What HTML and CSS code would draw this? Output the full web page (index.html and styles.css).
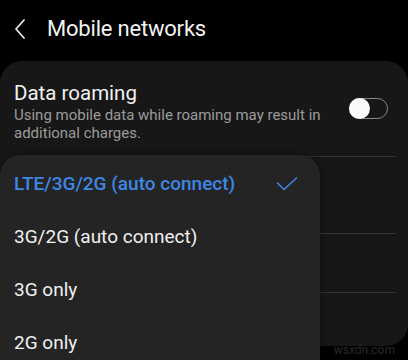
FILE: index.html
```html
<!DOCTYPE html>
<html>
<head>
<meta charset="utf-8">
<link rel="stylesheet" href="styles.css">
</head>
<body>
<div class="screen">
  <header class="header">
    <svg class="back" width="14" height="22" viewBox="0 0 14 22"><path d="M11 2 L3 11 L11 20" fill="none" stroke="#e8e8e8" stroke-width="1.8" stroke-linecap="round" stroke-linejoin="round"/></svg>
    <h1 class="title">Mobile networks</h1>
  </header>
  <main class="card">
    <div class="row roaming">
      <div class="texts">
        <div class="row-title">Data roaming</div>
        <div class="row-sub">Using mobile data while roaming may result in additional charges.</div>
      </div>
      <div class="toggle"><div class="knob"></div></div>
    </div>
    <div class="divider"></div>
    <div class="row plain"></div>
    <div class="divider"></div>
    <div class="row short"></div>
    <div class="divider"></div>
    <div class="row plain"></div>
  </main>
  <div class="watermark">wsxdn.com</div>
  <div class="menu">
    <div class="item selected"><span>LTE/3G/2G (auto connect)</span>
      <svg class="check" width="22" height="14" viewBox="0 0 22 14"><path d="M1.5 6 L8 12.5 L20.5 1" fill="none" stroke="#3d87e6" stroke-width="1.6" stroke-linecap="round" stroke-linejoin="round"/></svg>
    </div>
    <div class="item">3G/2G (auto connect)</div>
    <div class="item">3G only</div>
    <div class="item">2G only</div>
  </div>
</div>
</body>
</html>
```
FILE: styles.css
```css
* { box-sizing: border-box; }
html, body { margin: 0; padding: 0; background: #000; }
body { font-family: "Roboto", "Noto Sans", sans-serif; color: #f2f2f2; }
.screen { position: relative; width: 408px; height: 360px; overflow: hidden; background: #000; }
.header { height: 61px; display: flex; align-items: center; padding: 0 0 4px 13px; }
.back { display: block; margin-right: 20px; }
.title { margin: 0; font-size: 22px; font-weight: 400; letter-spacing: -0.2px; color: #f2f2f2; }
.card { background: #171717; border-radius: 22px; height: 285px; }
.row { padding: 0 14px; }
.roaming { display: flex; align-items: center; height: 95px; padding-top: 4px; }
.texts { flex: 1; }
.row-title { font-size: 20.5px; line-height: 26px; color: #f2f2f2; }
.row-sub { font-size: 15px; line-height: 18px; color: #9b9b9b; width: 330px; }
.toggle { width: 39px; height: 21px; border: 1.5px solid #8a8a8a; border-radius: 11px; position: relative; margin-right: 6px; margin-top: -4px; flex: none; }
.knob { position: absolute; left: -1px; top: -1px; width: 21px; height: 21px; border-radius: 50%; background: #fafafa; }
.divider { height: 1px; background: #343434; margin: 0 12px 0 14px; }
.plain { height: 76px; }
.short { height: 58px; }
.watermark { position: absolute; right: 13px; bottom: 3px; font-size: 12px; color: #2a2a2a; }
.menu { position: absolute; left: 0; top: 155px; width: 320px; height: 230px; background: #242424; border-radius: 20px; box-shadow: 0 0 8px rgba(0,0,0,0.5); padding-top: 2px; }
.item { height: 53px; display: flex; align-items: center; justify-content: space-between; padding: 0 22px 0 14px; font-size: 19px; color: #f0f0f0; }
.item.selected { color: #3d87e6; font-weight: 500; }
.check { display: block; }
```
